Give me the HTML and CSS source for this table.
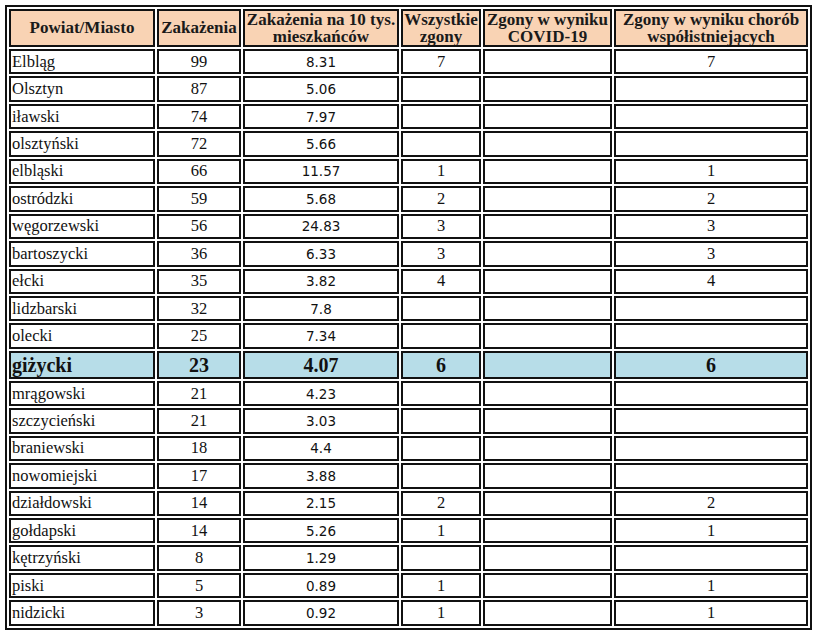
FILE: index.html
```html
<!DOCTYPE html>
<html lang="pl">
<head>
<meta charset="utf-8">
<title>Zakażenia</title>
<link rel="stylesheet" href="styles.css">
</head>
<body>
<table class="stats">
  <colgroup>
    <col class="c1"><col class="c2"><col class="c3"><col class="c4"><col class="c5"><col class="c6">
  </colgroup>
  <thead>
    <tr class="head">
      <th>Powiat/Miasto</th>
      <th>Zakażenia</th>
      <th>Zakażenia na 10 tys.<br>mieszkańców</th>
      <th>Wszystkie<br>zgony</th>
      <th>Zgony w wyniku<br>COVID-19</th>
      <th>Zgony w wyniku chorób<br>współistniejących</th>
    </tr>
  </thead>
  <tbody>
    <tr><td class="name">Elbląg</td><td>99</td><td class="dec">8.31</td><td>7</td><td></td><td>7</td></tr>
    <tr><td class="name">Olsztyn</td><td>87</td><td class="dec">5.06</td><td></td><td></td><td></td></tr>
    <tr><td class="name">iławski</td><td>74</td><td class="dec">7.97</td><td></td><td></td><td></td></tr>
    <tr><td class="name">olsztyński</td><td>72</td><td class="dec">5.66</td><td></td><td></td><td></td></tr>
    <tr><td class="name">elbląski</td><td>66</td><td class="dec">11.57</td><td>1</td><td></td><td>1</td></tr>
    <tr><td class="name">ostródzki</td><td>59</td><td class="dec">5.68</td><td>2</td><td></td><td>2</td></tr>
    <tr><td class="name">węgorzewski</td><td>56</td><td class="dec">24.83</td><td>3</td><td></td><td>3</td></tr>
    <tr><td class="name">bartoszycki</td><td>36</td><td class="dec">6.33</td><td>3</td><td></td><td>3</td></tr>
    <tr><td class="name">ełcki</td><td>35</td><td class="dec">3.82</td><td>4</td><td></td><td>4</td></tr>
    <tr><td class="name">lidzbarski</td><td>32</td><td class="dec">7.8</td><td></td><td></td><td></td></tr>
    <tr><td class="name">olecki</td><td>25</td><td class="dec">7.34</td><td></td><td></td><td></td></tr>
    <tr class="hl"><td class="name">giżycki</td><td>23</td><td>4.07</td><td>6</td><td></td><td>6</td></tr>
    <tr><td class="name">mrągowski</td><td>21</td><td class="dec">4.23</td><td></td><td></td><td></td></tr>
    <tr><td class="name">szczycieński</td><td>21</td><td class="dec">3.03</td><td></td><td></td><td></td></tr>
    <tr><td class="name">braniewski</td><td>18</td><td class="dec">4.4</td><td></td><td></td><td></td></tr>
    <tr><td class="name">nowomiejski</td><td>17</td><td class="dec">3.88</td><td></td><td></td><td></td></tr>
    <tr><td class="name">działdowski</td><td>14</td><td class="dec">2.15</td><td>2</td><td></td><td>2</td></tr>
    <tr><td class="name">gołdapski</td><td>14</td><td class="dec">5.26</td><td>1</td><td></td><td>1</td></tr>
    <tr><td class="name">kętrzyński</td><td>8</td><td class="dec">1.29</td><td></td><td></td><td></td></tr>
    <tr><td class="name">piski</td><td>5</td><td class="dec">0.89</td><td>1</td><td></td><td>1</td></tr>
    <tr><td class="name">nidzicki</td><td>3</td><td class="dec">0.92</td><td>1</td><td></td><td>1</td></tr>
  </tbody>
</table>
</body>
</html>
```
FILE: styles.css
```css
html, body {
  margin: 0;
  padding: 0;
  background: #ffffff;
}
body {
  padding: 5px 0 0 5px;
  font-family: "Liberation Serif", "Times New Roman", serif;
  color: #111111;
}
.stats {
  table-layout: fixed;
  width: 807px;
  border-collapse: separate;
  border-spacing: 2px;
  border: 2px solid #111111;
}
.stats .c1 { width: 146px; }
.stats .c2 { width: 84px; }
.stats .c3 { width: 156px; }
.stats .c4 { width: 80px; }
.stats .c5 { width: 129px; }
.stats .c6 { width: 194px; }
.stats th,
.stats td {
  box-sizing: border-box;
  border: 2px solid #111111;
  padding: 0 1px;
  text-align: center;
  vertical-align: middle;
  overflow: hidden;
  white-space: nowrap;
}
.stats th {
  background: #f9d3b4;
  font-weight: bold;
  font-size: 17px;
  line-height: 16.5px;
  padding-top: 1px;
  color: #1a1a1a;
}
.head {
  height: 37px;
}
.stats td {
  font-size: 16.5px;
  line-height: 18px;
}
.stats tbody tr {
  height: 25.45px;
}
.stats td.name {
  text-align: left;
}
.stats td.dec {
  font-family: "DejaVu Sans", Verdana, sans-serif;
  font-size: 13.5px;
}
.stats tbody tr.hl {
  height: 28px;
}
.stats tr.hl td {
  background: #b7dde8;
  font-weight: bold;
  font-size: 20px;
  line-height: 22px;
}
```
